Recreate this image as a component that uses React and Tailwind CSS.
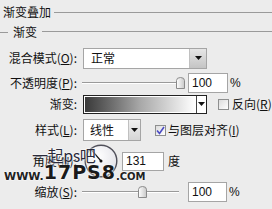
import React from "react";

const font = { fontFamily: '"Noto Sans CJK SC", "Noto Sans", sans-serif' };

function Arrow() {
  return (
    <svg width="7" height="4" viewBox="0 0 7 4">
      <path d="M0 0 H7 L3.5 4 Z" fill="#111" />
    </svg>
  );
}

function Thumb() {
  return (
    <svg width="9" height="12" viewBox="0 0 9 12">
      <defs>
        <linearGradient id="tg" x1="0" x2="1" y1="0" y2="0">
          <stop offset="0" stopColor="#ffffff" />
          <stop offset="1" stopColor="#c8c8c8" />
        </linearGradient>
      </defs>
      <path d="M0.5 11.5 V3.5 Q0.5 0.5 4.5 0.5 Q8.5 0.5 8.5 3.5 V11.5 Z" fill="url(#tg)" stroke="#8a8a8a" />
    </svg>
  );
}

function Slider({ w, pos }) {
  return (
    <div className="relative h-[14px]" style={{ width: w }}>
      <div className="absolute left-0 right-0 top-[6px] h-[1px] bg-[#9a9a9a]" />
      <div className="absolute left-0 right-0 top-[7px] h-[1px] bg-[#ffffff]" />
      <div className="absolute top-[1px]" style={{ left: pos }}>
        <Thumb />
      </div>
    </div>
  );
}

function Checkbox({ checked }) {
  return (
    <div className="w-[11px] h-[11px] border border-[#8e8f8f] bg-gradient-to-br from-[#dcdcdc] to-[#ffffff] flex items-center justify-center">
      {checked && (
        <svg width="9" height="9" viewBox="0 0 9 9">
          <path d="M1 4.5 L3.5 7.5 L8 1" fill="none" stroke="#4b4bc4" strokeWidth="1.6" />
        </svg>
      )}
    </div>
  );
}

function Label({ children }) {
  return (
    <div className="w-[78px] text-right text-[12px] leading-none text-[#111] pr-[1px]">{children}</div>
  );
}

function u(ch) {
  return <span className="underline underline-offset-1">{ch}</span>;
}

export default function App() {
  return (
    <div className="relative w-[272px] h-[209px] bg-[#ececec] overflow-hidden text-[#111]" style={font}>
      {/* header row */}
      <div className="h-[24px] flex items-center">
        <span className="ml-[3px] text-[12px] leading-none">渐变叠加</span>
        <div className="ml-[3px] flex-1 h-[1px] bg-[#9a9a9a] mt-[1px]" />
      </div>
      <div className="h-[16px] flex items-center">
        <div className="w-[8px] h-[1px] bg-[#9a9a9a]" />
        <span className="ml-[5px] text-[12px] leading-none">渐变</span>
        <div className="ml-[5px] flex-1 h-[1px] bg-[#9a9a9a] -mt-[1px]" />
      </div>

      {/* blend mode */}
      <div className="mt-[8px] h-[20px] flex items-center">
        <Label>混合模式({u("O")}):</Label>
        <div className="ml-[5px] w-[124px] h-[21px] border border-[#a5a5a5] bg-white flex items-center">
          <span className="flex-1 pl-[7px] text-[12px] leading-none">正常</span>
          <div className="w-[17px] h-full border-l border-[#c0c0c0] bg-gradient-to-b from-[#e6e6e6] to-[#c4c4c4] flex items-center justify-center">
            <Arrow />
          </div>
        </div>
      </div>

      {/* opacity */}
      <div className="mt-[5px] h-[19px] flex items-center">
        <Label>不透明度({u("P")}):</Label>
        <div className="ml-[4px]">
          <Slider w={100} pos={94} />
        </div>
        <div className="ml-[6px] w-[40px] h-[20px] border border-[#a5a5a5] bg-white flex items-center pl-[3px] text-[12px] leading-none" style={{ fontFamily: '"Liberation Sans", sans-serif' }}>100</div>
        <span className="ml-[2px] text-[12px] leading-none" style={{ fontFamily: '"Liberation Sans", sans-serif' }}>%</span>
      </div>

      {/* gradient */}
      <div className="mt-[3px] h-[18px] flex items-center">
        <Label>渐变:</Label>
        <div className="ml-[5px] w-[124px] h-[19px] border border-[#222] flex bg-white">
          <div className="flex-1 h-full border border-white bg-gradient-to-r from-[#3a3a3a] via-[#a8a8a8] to-[#ffffff]" />
          <div className="w-[10px] h-full border-l border-[#444] flex items-center justify-center bg-white">
            <Arrow />
          </div>
        </div>
        <div className="ml-[11px]">
          <Checkbox />
        </div>
        <span className="ml-[3px] text-[12px] leading-none">反向({u("R")})</span>
      </div>

      {/* style */}
      <div className="mt-[6px] h-[22px] flex items-center">
        <Label>样式({u("L")}):</Label>
        <div className="ml-[5px] w-[58px] h-[22px] border border-[#a5a5a5] bg-white flex items-center">
          <span className="flex-1 pl-[6px] text-[12px] leading-none">线性</span>
          <div className="w-[12px] h-full border-l border-[#c0c0c0] bg-gradient-to-b from-[#f0f0f0] to-[#d6d6d6] flex items-center justify-center">
            <Arrow />
          </div>
        </div>
        <div className="ml-[14px]">
          <Checkbox checked />
        </div>
        <span className="ml-[2px] text-[12px] leading-none">与图层对齐({u("I")})</span>
      </div>

      {/* angle */}
      <div className="mt-[4px] h-[32px] flex items-center">
        <Label>角度({u("N")}):</Label>
        <div className="ml-[6px]">
          <svg width="34" height="34" viewBox="0 0 34 34">
            <defs>
              <radialGradient id="dg" cx="0.4" cy="0.35" r="0.7">
                <stop offset="0" stopColor="#ffffff" />
                <stop offset="1" stopColor="#e2e2e8" />
              </radialGradient>
            </defs>
            <circle cx="17" cy="17" r="15.8" fill="url(#dg)" stroke="#50505a" strokeWidth="1.4" />
            <line x1="17" y1="17" x2="7.2" y2="5.7" stroke="#111" strokeWidth="1.2" />
            <circle cx="17" cy="17" r="1.5" fill="#111" />
          </svg>
        </div>
        <div className="ml-[4px] w-[42px] h-[19px] border border-[#a5a5a5] bg-white flex items-center pl-[3px] text-[12px] leading-none" style={{ fontFamily: '"Liberation Sans", sans-serif' }}>131</div>
        <span className="ml-[4px] text-[12px] leading-none">度</span>
      </div>

      {/* scale */}
      <div className="mt-[5px] h-[19px] flex items-center">
        <Label>缩放({u("S")}):</Label>
        <div className="ml-[4px]">
          <Slider w={97} pos={56} />
        </div>
        <div className="ml-[9px] w-[39px] h-[20px] border border-[#a5a5a5] bg-white flex items-center pl-[3px] text-[12px] leading-none" style={{ fontFamily: '"Liberation Sans", sans-serif' }}>100</div>
        <span className="ml-[2px] text-[12px] leading-none" style={{ fontFamily: '"Liberation Sans", sans-serif' }}>%</span>
      </div>

      {/* watermark overlay */}
      <div className="absolute left-[4px] top-[147px] w-[110px] pointer-events-none">
        <div className="pl-[28px] text-[16px] leading-none text-[#2a2a3a] tracking-tight" style={{ textShadow: "0 0 2px #fff, 0 0 2px #fff" }}>一起ps吧</div>
        <div className="flex items-end leading-none" style={{ fontFamily: '"DejaVu Sans", sans-serif', textShadow: "0 0 2px #fff, 0 0 2px #fff" }}>
          <span className="text-[11px] font-bold text-[#222]">WWW.</span>
          <span className="text-[19px] font-black text-[#1a1a1a] tracking-[1px]">17PS8</span>
          <span className="text-[10px] font-bold text-[#222]">.COM</span>
        </div>
      </div>
    </div>
  );
}
